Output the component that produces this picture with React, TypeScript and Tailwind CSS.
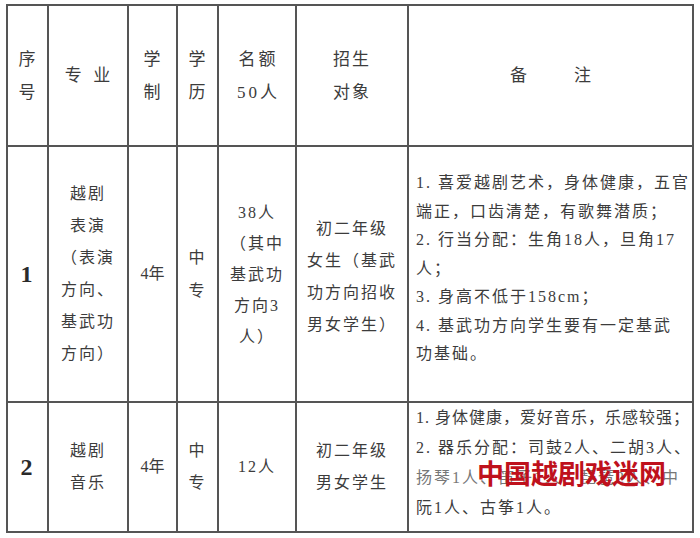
export default function App() {
  const font = { fontFamily: '"Liberation Serif", "Noto Sans CJK SC", serif' };

  return (
    <div className="relative w-[700px] h-[538px] bg-white overflow-hidden text-[#3c3c3c]" style={font}>
      <table className="table-fixed border-collapse ml-[6px] mt-[4px] w-[686px]">
        <colgroup>
          <col className="w-[41px]" />
          <col className="w-[80px]" />
          <col className="w-[49px]" />
          <col className="w-[41px]" />
          <col className="w-[78px]" />
          <col className="w-[112px]" />
          <col className="w-[285px]" />
        </colgroup>
        <thead>
          {/* header */}
          <tr className="h-[141px] text-[17px] leading-[33px] tracking-[1px]">
            <th className="border-2 border-[#555] font-normal text-center align-middle">序<br />号</th>
            <th className="border-2 border-[#555] font-normal text-center align-middle">专&nbsp;&nbsp;业</th>
            <th className="border-2 border-[#555] font-normal text-center align-middle">学<br />制</th>
            <th className="border-2 border-[#555] font-normal text-center align-middle">学<br />历</th>
            <th className="border-2 border-[#555] font-normal text-center align-middle tracking-[3px] pl-[3px]">名额<br />50人</th>
            <th className="border-2 border-[#555] font-normal text-center align-middle tracking-[2px]">招生<br />对象</th>
            <th className="border-2 border-[#555] font-normal text-center align-middle">
              <span className="tracking-[47px] pl-[47px]">备注</span>
            </th>
          </tr>
        </thead>
        <tbody className="text-[16px] tracking-[2px]">
          {/* row 1 */}
          <tr className="h-[256px]">
            <td className="border-2 border-[#555] text-center align-middle text-[24px] font-bold text-[#2a2a2a]">1</td>
            <td className="border-2 border-[#555] text-center align-middle leading-[32px]">
              越剧<br />表演<br />（表演<br />方向、<br />基武功<br />方向）
            </td>
            <td className="border-2 border-[#555] text-center align-middle tracking-normal">4年</td>
            <td className="border-2 border-[#555] text-center align-middle leading-[33px]">中<br />专</td>
            <td className="border-2 border-[#555] text-center align-middle leading-[31px]">
              38人<br />（其中<br />基武功<br />方向3<br />人）
            </td>
            <td className="border-2 border-[#555] text-center align-middle leading-[32px] pt-[6px]">
              初二年级<br />女生（基武<br />功方向招收<br />男女学生）
            </td>
            <td className="border-2 border-[#555] text-left align-middle leading-[28.5px] pl-[7px] pb-[10px]">
              <div className="whitespace-nowrap">1. 喜爱越剧艺术，身体健康，五官</div>
              <div className="whitespace-nowrap">端正，口齿清楚，有歌舞潜质；</div>
              <div className="whitespace-nowrap">2. 行当分配：生角18人，旦角17</div>
              <div className="whitespace-nowrap">人；</div>
              <div className="whitespace-nowrap">3. 身高不低于158cm；</div>
              <div className="whitespace-nowrap">4. 基武功方向学生要有一定基武</div>
              <div className="whitespace-nowrap">功基础。</div>
            </td>
          </tr>
          {/* row 2 */}
          <tr className="h-[130px]">
            <td className="border-2 border-[#555] text-center align-middle text-[24px] font-bold text-[#2a2a2a]">2</td>
            <td className="border-2 border-[#555] text-center align-middle leading-[32px]">越剧<br />音乐</td>
            <td className="border-2 border-[#555] text-center align-middle tracking-normal">4年</td>
            <td className="border-2 border-[#555] text-center align-middle leading-[32px]">中<br />专</td>
            <td className="border-2 border-[#555] text-center align-middle">12人</td>
            <td className="border-2 border-[#555] text-center align-middle leading-[32px]">初二年级<br />男女学生</td>
            <td className="border-2 border-[#555] text-left align-middle leading-[30px] pl-[7px] pb-[8px]">
              <div className="whitespace-nowrap tracking-[1px]">1. 身体健康，爱好音乐，乐感较强；</div>
              <div className="whitespace-nowrap">2. 器乐分配：司鼓2人、二胡3人、</div>
              <div className="whitespace-nowrap text-[#777]">扬琴1人、笛子1人、琵琶2人、中</div>
              <div className="whitespace-nowrap">阮1人、古筝1人。</div>
            </td>
          </tr>
        </tbody>
      </table>

      {/* watermark */}
      <div className="absolute left-[477px] top-[459px] text-[27px] leading-[32px] font-bold text-[#bf111c] whitespace-nowrap">
        中国越剧戏迷网
      </div>
    </div>
  );
}
